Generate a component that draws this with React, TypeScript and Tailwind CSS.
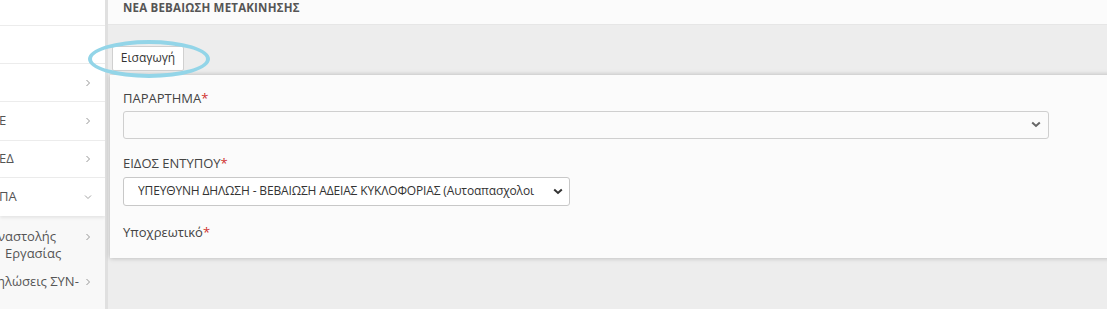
import React from 'react';

const Chevron = ({ down = false, className = '' }: { down?: boolean; className?: string }) => (
  <svg width="8" height="8" viewBox="0 0 8 8" className={className}>
    {down ? (
      <polyline points="1,2.5 4,5.5 7,2.5" fill="none" stroke="#9a9a9a" strokeWidth="0.9" />
    ) : (
      <polyline points="2.5,1 5.5,4 2.5,7" fill="none" stroke="#8a8a8a" strokeWidth="0.9" />
    )}
  </svg>
);

const SelectArrow = ({ color }: { color: string }) => (
  <svg width="10" height="7" viewBox="0 0 10 7">
    <polyline points="1.2,1.5 5,5 8.8,1.5" fill="none" stroke={color} strokeWidth="2" />
  </svg>
);

export default function App() {
  return (
    <div className="relative w-[1107px] h-[317px] bg-white overflow-hidden font-['Open_Sans',sans-serif]">
      <div className="flex h-[309px]">
        {/* Sidebar, scrolled off to the left */}
        <aside className="w-[105px] shrink-0 bg-white flex flex-col text-[13px] text-[#555] overflow-hidden">
          <div className="h-[26px] border-b border-[#ececec]" />
          <div className="h-[38px] border-b border-[#ececec]" />
          <div className="h-[38px] border-b border-[#ececec] flex items-center justify-end pr-[13px]">
            <Chevron />
          </div>
          <div className="h-[39px] border-b border-[#ececec] flex items-center justify-between pr-[13px]">
            <span className="-ml-[1px]">Ε</span>
            <Chevron />
          </div>
          <div className="h-[37px] border-b border-[#ececec] flex items-center justify-between pr-[13px]">
            <span className="-ml-[1px]">ΕΔ</span>
            <Chevron />
          </div>
          <div className="relative z-10 h-[38px] flex items-center justify-between pr-[13px] bg-white shadow-[0_2px_3px_rgba(0,0,0,0.08)]">
            <span className="-ml-[1px]">ΠΑ</span>
            <Chevron down />
          </div>
          <div className="flex-1 bg-[#f8f8f8] pt-[12px]">
            <div className="flex justify-between pr-[13px]">
              <div className="leading-[17px]">
                <div className="-ml-[2px]">ναστολής</div>
                <div className="pl-[5px]">Εργασίας</div>
              </div>
              <Chevron className="mt-[5px]" />
            </div>
            <div className="flex justify-between items-center pr-[13px] mt-[11px] leading-[17px]">
              <span className="-ml-[3px] whitespace-nowrap">ηλώσεις ΣΥΝ-</span>
              <Chevron />
            </div>
          </div>
        </aside>

        {/* Main */}
        <main className="flex-1 flex flex-col bg-[#ededed] border-l-[3px] border-[#e0e0e0] min-w-0">
          <div className="h-[25px] shrink-0 bg-[#fbfbfb] border-b border-[#e6e6e6] pl-[15px] flex items-center">
            <h1 className="text-[11.5px] font-bold text-[#555] tracking-[0.2px] leading-none -mt-[9px]">
              ΝΕΑ ΒΕΒΑΙΩΣΗ ΜΕΤΑΚΙΝΗΣΗΣ
            </h1>
          </div>

          <div className="pt-[19px] pl-[4px]">
            <button className="h-[25px] w-[72px] bg-white border border-[#d0d0d0] rounded-[2px] text-[12px] text-[#333]">
              Εισαγωγή
            </button>
          </div>

          <div className="ml-[2px] mt-[4px] w-[1010px] bg-[#fbfbfb] shadow-[0_0_5px_rgba(0,0,0,0.25)] pl-[13px] pt-[14px] pb-[17px]">
            <div className="h-[18px] leading-[18px] text-[13px] text-[#444]">
              ΠΑΡΑΡΤΗΜΑ<span className="text-[#d0312d]">*</span>
            </div>
            <div className="mt-[4px] w-[926px] h-[28px] bg-[#fbfbfb] border border-[#cfcfcf] rounded-[3px] flex items-center justify-end pr-[7px]">
              <SelectArrow color="#666" />
            </div>

            <div className="mt-[15px] h-[18px] leading-[18px] text-[13px] text-[#444]">
              ΕΙΔΟΣ ΕΝΤΥΠΟΥ<span className="text-[#d0312d]">*</span>
            </div>
            <div className="mt-[5px] w-[447px] h-[29px] bg-white border border-[#c8c8c8] rounded-[3px] flex items-center pl-[14px] pr-[6px]">
              <span className="flex-1 overflow-hidden whitespace-nowrap text-[12px] tracking-[-0.15px] text-[#333]">
                ΥΠΕΥΘΥΝΗ ΔΗΛΩΣΗ - ΒΕΒΑΙΩΣΗ ΑΔΕΙΑΣ ΚΥΚΛΟΦΟΡΙΑΣ (Αυτοαπασχολοι
              </span>
              <span className="ml-[8px]">
                <SelectArrow color="#333" />
              </span>
            </div>

            <div className="mt-[17px] h-[18px] leading-[18px] text-[13px] text-[#444]">
              Υποχρεωτικό<span className="text-[#d0312d]">*</span>
            </div>
          </div>
        </main>
      </div>

      {/* Highlight ring round the button */}
      <div className="absolute left-[88px] top-[40px] w-[122px] h-[38px] rounded-[50%] border-[4px] border-[#93d5e8] pointer-events-none" />
    </div>
  );
}
